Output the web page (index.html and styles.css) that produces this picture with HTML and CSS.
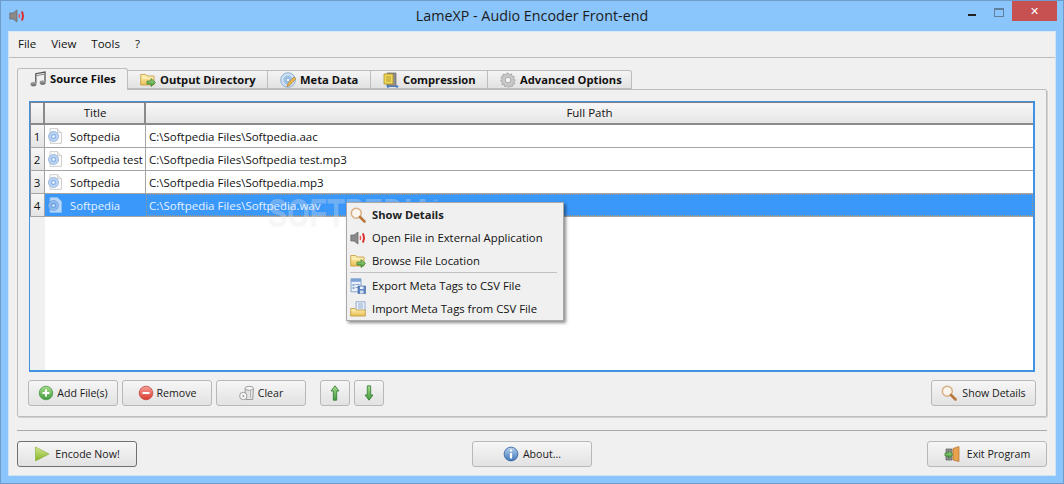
FILE: index.html
```html
<!DOCTYPE html>
<html lang="en">
<head>
<meta charset="utf-8">
<title>LameXP - Audio Encoder Front-end</title>
<link rel="stylesheet" href="styles.css">
</head>
<body>
<svg class="defs" width="0" height="0" aria-hidden="true">
  <defs>
    <linearGradient id="gf" x1="0" y1="0" x2="0" y2="1"><stop offset="0" stop-color="#fff3b8"/><stop offset="1" stop-color="#e9bf55"/></linearGradient>
    <linearGradient id="gg" x1="0" y1="0" x2="0" y2="1"><stop offset="0" stop-color="#a9dc8c"/><stop offset="1" stop-color="#3f9a3c"/></linearGradient>
    <linearGradient id="gr" x1="0" y1="0" x2="0" y2="1"><stop offset="0" stop-color="#f5a19a"/><stop offset="1" stop-color="#d8392e"/></linearGradient>
    <linearGradient id="gb" x1="0" y1="0" x2="0" y2="1"><stop offset="0" stop-color="#b6d2ef"/><stop offset="1" stop-color="#3f76b8"/></linearGradient>
    <linearGradient id="gp" x1="0" y1="0" x2="0" y2="1"><stop offset="0" stop-color="#d4e88a"/><stop offset="1" stop-color="#82b32a"/></linearGradient>
    <linearGradient id="gn" x1="0" y1="0" x2="0" y2="1"><stop offset="0" stop-color="#b5b5b5"/><stop offset="1" stop-color="#5f5f5f"/></linearGradient>
    <symbol id="i-speaker" viewBox="0 0 16 16">
      <path d="M.8 5h3.200l4-3v12l-4-3H.8z" fill="#8a8a8a" stroke="#666" stroke-width=".7"/>
      <path d="M10.200 6q.8 2 0 4" fill="none" stroke="#e85a5a" stroke-width="1.500"/>
      <path d="M12.800 3.500q2.400 4.500 0 9" fill="none" stroke="#dc2f2f" stroke-width="2"/>
    </symbol>
    <symbol id="i-notes" viewBox="0 0 16 16">
      <path d="M5.800 12.500V2.700L15 1v10" fill="none" stroke="#555" stroke-width="1.300"/>
      <path d="M5.800 4.800L15 3" fill="none" stroke="#888" stroke-width="1"/>
      <ellipse cx="3.500" cy="13" rx="3" ry="2.300" fill="url(#gn)"/>
      <ellipse cx="12.700" cy="11.500" rx="3" ry="2.300" fill="url(#gn)"/>
    </symbol>
    <symbol id="i-folder" viewBox="0 0 16 16">
      <path d="M.7 13V2.500h5l1.300 1.500h7v9z" fill="url(#gf)" stroke="#c09a3c" stroke-width=".8"/>
      <path d="M2 6h11" stroke="#fff6c9" stroke-width="1"/>
      <path d="M7 9h4V6.500l4.500 4-4.500 4V12H7z" fill="url(#gg)" stroke="#35802f" stroke-width=".7"/>
    </symbol>
    <symbol id="i-disc" viewBox="0 0 16 16">
      <circle cx="8" cy="8" r="7.300" fill="#cfe0f2" stroke="#7ea0c6" stroke-width=".8"/>
      <circle cx="8" cy="8" r="4.500" fill="#9dc0e6"/>
      <circle cx="8" cy="8" r="1.600" fill="#fff" stroke="#7ea0c6" stroke-width=".6"/>
      <path d="M7 14.500l1-3 6-6.500 1.800 1.800-6 6.400z" fill="#f0bc52" stroke="#a87a22" stroke-width=".7"/>
    </symbol>
    <symbol id="i-archive" viewBox="0 0 16 16">
      <path d="M4 1h9v13H4z" fill="#8f8f8f" stroke="#666" stroke-width=".7"/>
      <path d="M1 2h9v10H1z" fill="#f0d75a" stroke="#a8902c" stroke-width=".8"/>
      <path d="M3 5h5M3 7h5M3 9h5" stroke="#a8902c" stroke-width=".8"/>
      <path d="M5 14.500h9" stroke="#4a7cc4" stroke-width="1"/>
      <circle cx="5" cy="14.500" r="1.300" fill="#4a7cc4"/><circle cx="14" cy="14.500" r="1.300" fill="#4a7cc4"/>
    </symbol>
    <symbol id="i-gear" viewBox="0 0 16 16">
      <path d="M8 .8l1.300 2 2.200-.9.400 2.300 2.300.3-.7 2.300 2 1.200-1.600 1.700 1 2.100-2.300.5-.3 2.300-2.300-.5L8.700 15.500 7 13.800l-2 1.100-.7-2.200-2.300-.1.300-2.300L.6 9l1.400-1.800-1.200-2 2.200-.7V2.200l2.300.3z" fill="#c8c8c8" stroke="#9a9a9a" stroke-width=".7"/>
      <circle cx="8" cy="8" r="2.800" fill="#f4f4f4" stroke="#a0a0a0" stroke-width=".8"/>
    </symbol>
    <symbol id="i-file" viewBox="0 0 16 16">
      <path d="M3 .6h7.500l4 4v10.800H3z" fill="#fbfbfb" stroke="#c4c4c4" stroke-width=".8"/>
      <path d="M10.500 .6v4h4" fill="#e9e9e9" stroke="#c4c4c4" stroke-width=".7"/>
      <circle cx="6.500" cy="8.500" r="5" fill="#bdd5f2" stroke="#7fa3d6" stroke-width=".7"/>
      <circle cx="6.500" cy="8.500" r="2.700" fill="#8fb6e8"/>
      <circle cx="6.500" cy="8.500" r="1.200" fill="#fff"/>
    </symbol>
    <symbol id="i-filesel" viewBox="0 0 16 16">
      <path d="M3 .6h7.500l4 4v10.800H3z" fill="#b8d9fa" stroke="#92bfee" stroke-width=".8"/>
      <circle cx="6.500" cy="8.500" r="5" fill="#8ebaf0" stroke="#6a9cd6" stroke-width=".7"/>
      <circle cx="6.500" cy="8.500" r="2.700" fill="#6fa4e4"/>
      <circle cx="6.500" cy="8.500" r="1.200" fill="#dcecfd"/>
    </symbol>
    <symbol id="i-search" viewBox="0 0 16 16">
      <circle cx="6.300" cy="6.300" r="5" fill="#fdf8ee" fill-opacity=".7" stroke="#d8ae82" stroke-width="1.500"/>
      <path d="M10 10l4.500 4.500" stroke="#b9773d" stroke-width="2.600" stroke-linecap="round"/>
    </symbol>
    <symbol id="i-export" viewBox="0 0 16 16">
      <path d="M1 .8h10v13H1z" fill="#eaf1fa" stroke="#6f93c0" stroke-width=".8"/>
      <path d="M1 .8h10v3H1z" fill="#7ba3d6"/>
      <path d="M2.500 6h2v2h-2zM5.500 6h4v1h-4zM2.500 9h2v2h-2zM5.500 9h4v1h-4z" fill="#8aa8cc"/>
      <path d="M8 8h7.500v7.500H8z" fill="#5c87c4" stroke="#3d639a" stroke-width=".6"/>
      <path d="M10 8.500h3.500v2.500H10z" fill="#eef3fa"/><path d="M10 12.500h3.500v3H10z" fill="#d5dfec"/>
    </symbol>
    <symbol id="i-import" viewBox="0 0 16 16">
      <path d="M6 .8h9v9H6z" fill="#eaf1fa" stroke="#7d9cc4" stroke-width=".8"/>
      <path d="M8 3h5M8 5h5M8 7h5" stroke="#7d9cc4" stroke-width=".8"/>
      <path d="M.7 15V7.500h4.500l1.300 1.500h8.800v6z" fill="url(#gf)" stroke="#bd9535" stroke-width=".8"/>
    </symbol>
    <symbol id="i-add" viewBox="0 0 16 16">
      <circle cx="8" cy="8" r="6.800" fill="url(#gg)" stroke="#4a9a4a" stroke-width=".8"/>
      <path d="M8 4.500v7M4.500 8h7" stroke="#fff" stroke-width="2"/>
    </symbol>
    <symbol id="i-remove" viewBox="0 0 16 16">
      <circle cx="8" cy="8" r="6.800" fill="url(#gr)" stroke="#c4483f" stroke-width=".8"/>
      <path d="M4.500 8h7" stroke="#fff" stroke-width="2"/>
    </symbol>
    <symbol id="i-clear" viewBox="0 0 16 16">
      <path d="M6 3.500h8.500l-.8 11H7z" fill="#e4e4e4" stroke="#8a8a8a" stroke-width=".8"/>
      <ellipse cx="10.200" cy="3.300" rx="4.200" ry="2" fill="#f6f6f6" stroke="#8a8a8a" stroke-width=".8"/>
      <path d="M11.500 6v7" stroke="#a5a5a5" stroke-width=".8"/>
      <circle cx="4.300" cy="11" r="3.700" fill="#f4f4f4" stroke="#8a8a8a" stroke-width=".8"/>
      <circle cx="4.300" cy="11" r="1" fill="#9a9a9a"/>
    </symbol>
    <symbol id="i-up" viewBox="0 0 16 16">
      <path d="M8 .8l4 5.200h-2.300v9.200H6.300V6H4z" fill="url(#gg)" stroke="#2f7a32" stroke-width=".8"/>
    </symbol>
    <symbol id="i-down" viewBox="0 0 16 16">
      <path d="M6.300 .8h3.400V10H12l-4 5.200L4 10h2.300z" fill="url(#gg)" stroke="#2f7a32" stroke-width=".8"/>
    </symbol>
    <symbol id="i-play" viewBox="0 0 16 16">
      <path d="M1.500 1L15 8 1.500 15z" fill="url(#gp)" stroke="#8db23e" stroke-width=".7"/>
    </symbol>
    <symbol id="i-info" viewBox="0 0 16 16">
      <circle cx="8" cy="8" r="6.900" fill="url(#gb)" stroke="#31609e" stroke-width=".8"/>
      <circle cx="8" cy="4.500" r="1.200" fill="#fff"/>
      <path d="M8 7v5.500" stroke="#fff" stroke-width="2.200"/>
    </symbol>
    <symbol id="i-exit" viewBox="0 0 16 16">
      <path d="M2 3h6v11H2z" fill="#8f8f8f" stroke="#5d5d5d" stroke-width=".7"/>
      <path d="M9 2.500l6-2v15l-6-1.500z" fill="#e8a24e" stroke="#b0702a" stroke-width=".7"/>
      <path d="M1 7h3.500V4.800L9 8.500l-4.500 3.700V10H1z" fill="url(#gg)" stroke="#35802f" stroke-width=".7"/>
    </symbol>
  </defs>
</svg>

<div class="window">
  <header class="titlebar">
    <svg class="ico app-ico"><use href="#i-speaker"/></svg>
    <span class="title">LameXP - Audio Encoder Front-end</span>
    <div class="winctrls">
      <span class="wc wc-min"><i></i></span>
      <span class="wc wc-max"><i></i></span>
      <span class="wc wc-close">&#x2715;</span>
    </div>
  </header>

  <div class="client">
    <nav class="menubar">
      <span>File</span><span>View</span><span>Tools</span><span>?</span>
    </nav>

    <main class="content">
      <div class="tabs">
        <div class="tab active t1"><svg class="ico"><use href="#i-notes"/></svg><span>Source Files</span></div>
        <div class="tab t2"><svg class="ico"><use href="#i-folder"/></svg><span>Output Directory</span></div>
        <div class="tab t3"><svg class="ico"><use href="#i-disc"/></svg><span>Meta Data</span></div>
        <div class="tab t4"><svg class="ico"><use href="#i-archive"/></svg><span>Compression</span></div>
        <div class="tab t5"><svg class="ico"><use href="#i-gear"/></svg><span>Advanced Options</span></div>
      </div>

      <section class="pane">
        <div class="table">
          <div class="row head">
            <div class="rh"></div>
            <div class="cell c-title"><span>Title</span></div>
            <div class="cell c-path"><span>Full Path</span></div>
          </div>
          <div class="row">
            <div class="rh">1</div>
            <div class="cell c-title"><svg class="ico"><use href="#i-file"/></svg><span>Softpedia</span></div>
            <div class="cell c-path">C:\Softpedia Files\Softpedia.aac</div>
          </div>
          <div class="row">
            <div class="rh">2</div>
            <div class="cell c-title"><svg class="ico"><use href="#i-file"/></svg><span>Softpedia test</span></div>
            <div class="cell c-path">C:\Softpedia Files\Softpedia test.mp3</div>
          </div>
          <div class="row">
            <div class="rh">3</div>
            <div class="cell c-title"><svg class="ico"><use href="#i-file"/></svg><span>Softpedia</span></div>
            <div class="cell c-path">C:\Softpedia Files\Softpedia.mp3</div>
          </div>
          <div class="row selected">
            <div class="rh">4</div>
            <div class="cell c-title"><svg class="ico"><use href="#i-filesel"/></svg><span>Softpedia</span></div>
            <div class="cell c-path">C:\Softpedia Files\Softpedia.wav</div>
          </div>
          <div class="filler"><div class="rh-fill"></div></div>
          <div class="watermark">SOFTPEDIA<sup>&reg;</sup></div>
          <ul class="ctx">
            <li class="strong"><svg class="ico"><use href="#i-search"/></svg>Show Details</li>
            <li><svg class="ico"><use href="#i-speaker"/></svg>Open File in External Application</li>
            <li><svg class="ico"><use href="#i-folder"/></svg>Browse File Location</li>
            <li class="sep" role="separator"></li>
            <li><svg class="ico"><use href="#i-export"/></svg>Export Meta Tags to CSV File</li>
            <li><svg class="ico"><use href="#i-import"/></svg>Import Meta Tags from CSV File</li>
          </ul>
        </div>

        <div class="pane-btns">
          <button class="btn w90"><svg class="ico"><use href="#i-add"/></svg>Add File(s)</button>
          <button class="btn w90"><svg class="ico"><use href="#i-remove"/></svg>Remove</button>
          <button class="btn w90"><svg class="ico"><use href="#i-clear"/></svg>Clear</button>
          <button class="btn w30 ml10"><svg class="ico"><use href="#i-up"/></svg></button>
          <button class="btn w30"><svg class="ico"><use href="#i-down"/></svg></button>
          <button class="btn w105 push"><svg class="ico"><use href="#i-search"/></svg>Show Details</button>
        </div>
      </section>

      <hr class="divider">

      <div class="bottom">
        <button class="btn w120 default"><svg class="ico"><use href="#i-play"/></svg>Encode Now!</button>
        <button class="btn w120"><svg class="ico"><use href="#i-info"/></svg>About...</button>
        <button class="btn w120 exit"><svg class="ico"><use href="#i-exit"/></svg>Exit Program</button>
      </div>
    </main>
  </div>
</div>
</body>
</html>
```

FILE: styles.css
```css
* { box-sizing: border-box; }
html, body { margin: 0; padding: 0; }
body {
  width: 1064px;
  height: 484px;
  overflow: hidden;
  font-family: "Open Sans", "Noto Sans", "Liberation Sans", sans-serif;
  font-size: 11.5px;
  color: #111;
}
.defs { position: absolute; }
.ico { width: 16px; height: 16px; flex: none; display: block; }

.window {
  width: 1064px;
  height: 484px;
  background: #8ac5fb;
  border: 1px solid #6f9ccc;
  display: flex;
  flex-direction: column;
  padding: 0 7px 7px;
}
.titlebar {
  height: 30px;
  flex: none;
  display: flex;
  align-items: center;
  justify-content: center;
  position: relative;
}
.app-ico { position: absolute; left: 1px; top: 7px; }
.title { font-size: 14.3px; color: #1c1c1c; margin-bottom: 2px; }
.winctrls { position: absolute; right: -2px; top: 0; display: flex; align-items: flex-start; }
.wc { display: flex; align-items: center; justify-content: center; height: 20px; }
.wc-min { width: 28px; }
.wc-min i { width: 8px; height: 2px; background: #222; margin-top: 8px; }
.wc-max { width: 26px; }
.wc-max i { width: 10px; height: 9px; border: 1px solid #5f7f9f; border-top-width: 2px; margin-top: 2px; }
.wc-close { width: 45px; background: #c75050; color: #fff; font-size: 11px; font-weight: 700; font-family: "DejaVu Sans", sans-serif; margin-right: 1px; }

.client {
  flex: 1;
  background: #f0f0f0;
  border: 1px solid #cfe3f6;
  border-top-color: #d7e8f8;
  display: flex;
  flex-direction: column;
}
.menubar {
  height: 26px;
  flex: none;
  border-bottom: 1px solid #bcbcbc;
  display: flex;
  align-items: center;
  padding: 0 0 2px 9px;
  gap: 15px;
  font-size: 11.5px;
}
.content {
  flex: 1;
  display: flex;
  flex-direction: column;
  padding: 10px 8px 8px;
}

.tabs { display: flex; align-items: flex-end; height: 22px; position: relative; z-index: 1; margin-bottom: -1px; }
.tab {
  height: 19px;
  display: flex;
  align-items: center;
  gap: 4px;
  padding-left: 12px;
  font-weight: 700;
  font-size: 11.2px;
  background: linear-gradient(#f4f4f4, #e2e2e2);
  border: 1px solid #bdbdbd;
  border-left-width: 0;
  margin-bottom: 1px;
}
.tab span { margin-bottom: 1px; }
.tab.t5 { border-top-right-radius: 3px; }
.tab.active {
  height: 22px;
  background: #f0f0f0;
  border-left-width: 1px;
  border-bottom: 0;
  border-radius: 3px 3px 0 0;
  margin-bottom: 0;
  padding-bottom: 2px;
}
.t1 { width: 111px; }
.t2 { width: 140px; }
.t3 { width: 103px; }
.t4 { width: 117px; }
.t5 { width: 144px; }

.pane {
  height: 328px;
  flex: none;
  border: 1px solid #bdbdbd;
  border-radius: 0 2px 2px 2px;
  box-shadow: 1px 1px 0 #d0d0d0;
  padding: 11px 11px 9px;
  display: flex;
  flex-direction: column;
  gap: 8px;
}

.table {
  height: 271px;
  flex: none;
  background: #fff;
  border: 1px solid #3f92e4;
  border-width: 1px 2px 2px 1px;
  position: relative;
  display: flex;
  flex-direction: column;
}
.row { height: 23px; flex: none; display: flex; border-bottom: 1px solid #a5a5a5; }
.row.head { border-top: 1px solid #808080; border-bottom: 2px solid #8a8a8a; }
.rh {
  width: 15px;
  flex: none;
  background: linear-gradient(#f6f6f6, #e4e4e4);
  border-right: 1px solid #a5a5a5;
  display: flex;
  align-items: center;
  justify-content: center;
  font-size: 11.5px;
  box-shadow: inset 1px 0 0 #8a8a8a;
}
.cell {
  display: flex;
  align-items: center;
  padding-left: 3px;
  white-space: nowrap;
  overflow: hidden;
}
.c-title { width: 101px; flex: none; border-right: 1px solid #a5a5a5; font-size: 11.3px; padding-left: 2px; }
.c-title .ico { margin-right: 7px; }
.c-path { flex: 1; }
.head .rh, .head .cell {
  background: linear-gradient(#f8f8f8, #e5e5e5);
  justify-content: center;
  padding: 0 0 2px;
  font-size: 11.5px;
}
.head .rh { border-right: 2px solid #8a8a8a; }
.head .c-title { border-right: 2px solid #8a8a8a; }
.head .c-title span { margin-left: 1px; }
.selected { background: #3b98fb; color: #e8f3ff; }
.selected .c-title, .selected .c-path { color: #e6f2ff; }
.selected .rh { color: #111; }
.selected .c-title { border-right: 0; }
.selected .c-path { outline: 1px dotted rgba(228, 150, 70, .55); outline-offset: -1px; }
.filler { flex: 1; }
.rh-fill { width: 15px; height: 100%; background: #f0f0f0; }

.watermark {
  position: absolute;
  left: 238px;
  top: 91px;
  font-size: 40px;
  line-height: 40px;
  font-weight: 700;
  color: rgba(255, 255, 255, .3);
  text-shadow: 0 0 2px rgba(0, 0, 0, .05);
  font-family: "Liberation Sans", sans-serif;
  white-space: nowrap;
  transform: scaleX(.72);
  transform-origin: left top;
}
.watermark sup { font-size: 10px; vertical-align: top; line-height: 22px; font-weight: 400; }

.ctx {
  position: absolute;
  left: 316px;
  top: 100px;
  width: 218px;
  height: 119px;
  margin: 0;
  padding: 0 2px 0 1px;
  list-style: none;
  background: #f0f0f0;
  border: 1px solid #a8a8a8;
  box-shadow: 2px 2px 3px rgba(0, 0, 0, .45);
  font-size: 11.3px;
}
.ctx li { height: 23px; display: flex; align-items: center; gap: 6px; padding-left: 2px; white-space: nowrap; }
.ctx .strong { font-weight: 700; color: #222; font-size: 11.2px; }
.ctx .sep { height: 1px; background: #c2c2c2; margin: 0 4px 1px 2px; padding: 0; }

.pane-btns { display: flex; gap: 4px; height: 26px; flex: none; margin: 0 -1px; }
.btn {
  height: 26px;
  display: flex;
  align-items: center;
  justify-content: center;
  gap: 3px;
  padding: 0;
  font: inherit;
  font-size: 10.6px;
  color: #1a1a1a;
  background: linear-gradient(#f6f6f6, #e2e2e2);
  border: 1px solid #b8b8b8;
  border-radius: 3px;
}
.w90 { width: 90px; }
.w30 { width: 30px; }
.w105 { width: 105px; gap: 5px; }
.w120 { width: 120px; gap: 4px; }
.ml10 { margin-left: 10px; }
.push { margin-left: auto; }
.default { border-color: #707070; gap: 5px; }
.exit { gap: 7px; }

.divider { width: 100%; height: 1px; border: 0; background: #a9a9a9; margin: 13px 0 10px; flex: none; }
.bottom { display: flex; justify-content: space-between; }
```
